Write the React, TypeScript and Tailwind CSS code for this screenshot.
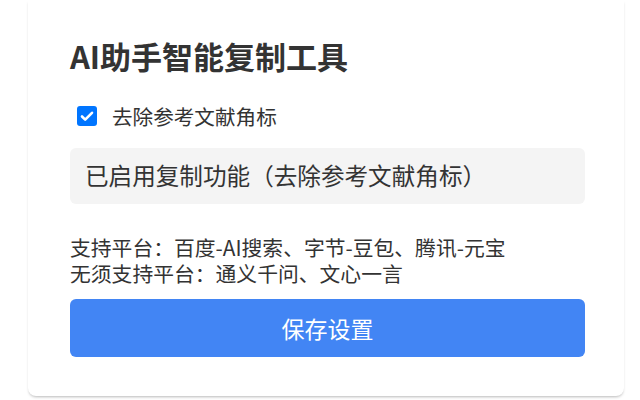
import React from "react";

export default function App() {
  return (
    <div
      className="w-[640px] h-[400px] bg-white overflow-hidden pl-[28px]"
      style={{ fontFamily: '"Noto Sans CJK SC", "Liberation Sans", sans-serif' }}
    >
      <div className="w-[596px] h-[396px] bg-white rounded-b-[8px] shadow-[0_2px_3px_-1px_rgba(0,0,0,0.28)] pl-[42px] pt-[37px] flex flex-col">
        <h1 className="text-[31px] leading-[37px] font-bold text-[#333333]">
          AI助手智能复制工具
        </h1>
        <label className="mt-[30px] h-[24px] flex items-center pl-[7px] gap-[15px] text-[20.6px] text-[#333333]">
          <span className="w-[20px] h-[20px] rounded-[3px] bg-[#0075ff] flex items-center justify-center">
            <svg width="16" height="16" viewBox="0 0 16 16" fill="none">
              <path d="M3 8.5l3.2 3.2L13 4.8" stroke="white" strokeWidth="2.6" strokeLinecap="round" strokeLinejoin="round" />
            </svg>
          </span>
          <span>去除参考文献角标</span>
        </label>
        <div className="mt-[20px] w-[515px] h-[56px] rounded-[6px] bg-[#f4f4f4] flex items-center pl-[15px] text-[23.6px] text-[#333333]">
          已启用复制功能（去除参考文献角标）
        </div>
        <div className="mt-[30px] text-[20.8px] leading-[26px] text-[#333333]">
          <div>支持平台：百度-AI搜索、字节-豆包、腾讯-元宝</div>
          <div>无须支持平台：通义千问、文心一言</div>
        </div>
        <button className="mt-[13px] w-[515px] h-[58px] rounded-[6px] bg-[#4285f4] text-white text-[23px] flex items-center justify-center">
          保存设置
        </button>
      </div>
    </div>
  );
}
